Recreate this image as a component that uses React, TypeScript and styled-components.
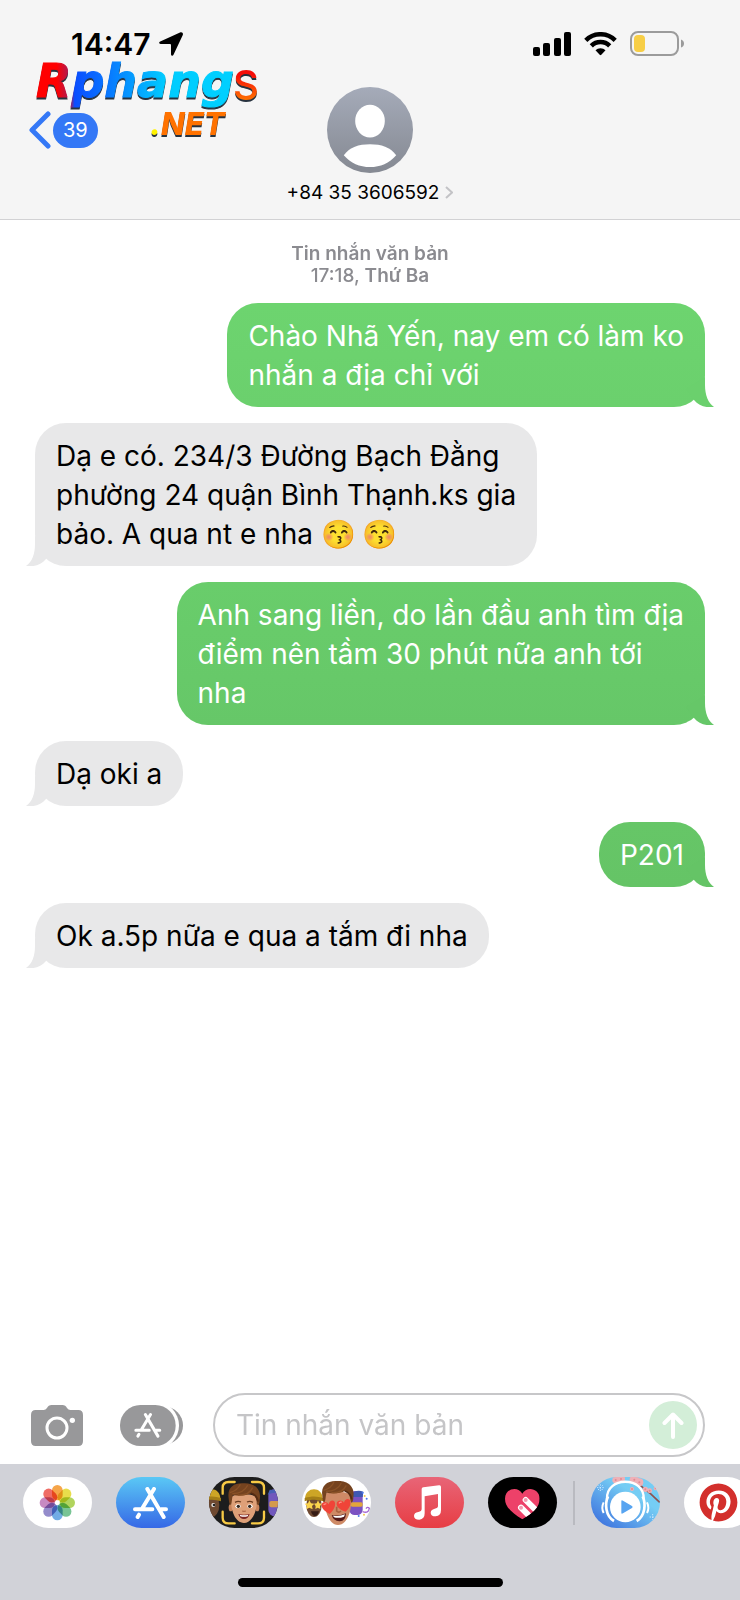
import React from "react";
import styled, { createGlobalStyle } from "styled-components";
import { FaPinterest } from "react-icons/fa";

const GlobalStyle = createGlobalStyle`
  * { box-sizing: border-box; }
  body {
    margin: 0;
    background: #fff;
    font-family: Inter, "Liberation Sans", sans-serif;
    color: #000;
  }
  button {
    border: 0;
    padding: 0;
    background: none;
    color: inherit;
    font: inherit;
    cursor: pointer;
  }
  svg { display: block; flex: none; }
`;

const Screen = styled.div`
  display: flex;
  flex-direction: column;
  min-height: 100vh;
  overflow: hidden;
`;

/* ---------- header ---------- */

const Header = styled.header`
  position: relative;
  background: #f5f5f5;
  border-bottom: 1px solid #d2d2d4;
`;

const StatusBar = styled.div`
  display: flex;
  align-items: center;
  justify-content: space-between;
  height: 87px;
  padding: 0 56px 0 71px;
`;

const Clock = styled.div`
  display: flex;
  align-items: center;
  gap: 8px;
  font-size: 30px;
  font-weight: 600;
  line-height: 36px;
`;

const Indicators = styled.div`
  display: flex;
  align-items: center;
  gap: 13px;
`;

const NavBar = styled.nav`
  display: grid;
  grid-template-columns: 1fr auto 1fr;
  padding: 0 28px 14px;
`;

const BackButton = styled.button`
  display: flex;
  align-items: center;
  gap: 2px;
  justify-self: start;
  height: 86px;
`;

const UnreadBadge = styled.span`
  padding: 0 10px;
  border-radius: 18px;
  background: #3478f6;
  color: #fff;
  font-size: 20px;
  line-height: 35px;
`;

const Contact = styled.button`
  display: flex;
  flex-direction: column;
  align-items: center;
  gap: 7px;
`;

const ContactName = styled.span`
  display: flex;
  align-items: center;
  gap: 6px;
  font-size: 19px;
  line-height: 25px;
`;

const SiteLogo = styled.svg`
  position: absolute;
  top: 50px;
  left: 30px;
  pointer-events: none;
  filter: drop-shadow(0 2px 0 #27323f);
`;

const LogoName = styled.text`
  font: italic 700 46px "DejaVu Sans", sans-serif;
  stroke-width: 1px;
`;
const LogoEnd = styled.text`
  font: 500 40px Inter, sans-serif;
`;
const LogoDomain = styled.text`
  font: italic 800 31px Inter, sans-serif;
`;

/* ---------- thread ---------- */

const Thread = styled.main`
  display: flex;
  flex: 1;
  flex-direction: column;
  gap: 16px;
  padding: 23px 35px;
`;

const DayStamp = styled.p`
  margin: 0;
  color: #8b8b90;
  font-size: 19px;
  font-weight: 600;
  line-height: 22px;
  text-align: center;
`;

const StampTime = styled.time`
  font-weight: 500;
`;

const Bubble = styled.div<{ $mine?: boolean; $tone: string }>`
  position: relative;
  align-self: ${(p) => (p.$mine ? "flex-end" : "flex-start")};
  max-width: 560px;
  padding: 14px 21px 12px;
  border-radius: 31px;
  background: ${(p) => p.$tone};
  color: ${(p) => (p.$mine ? "#fff" : "#000")};
  font-size: 28px;
  line-height: 39px;
  white-space: pre-line;
`;

const Tail = styled.svg<{ $mine?: boolean }>`
  position: absolute;
  bottom: 0;
  ${(p) => (p.$mine ? "right: -9px;" : "left: -9px; transform: scaleX(-1);")}
`;

const Emoji = styled.span`
  display: inline-block;
  height: 39px;
  margin-right: 6px;
  overflow: hidden;
  vertical-align: top;
`;

/* ---------- composer ---------- */

const Composer = styled.form`
  display: flex;
  align-items: center;
  gap: 30px;
  padding: 0 35px 7px 31px;
`;

const Attachments = styled.div`
  display: flex;
  gap: 37px;
`;

const Field = styled.div`
  display: flex;
  flex: 1;
  min-width: 0;
  align-items: center;
  height: 64px;
  padding: 0 6px 0 21px;
  border: 2px solid #c7c7c9;
  border-radius: 32px;
`;

const MessageInput = styled.input`
  flex: 1;
  min-width: 0;
  padding: 0;
  border: 0;
  outline: 0;
  background: none;
  font: 400 28px Inter, "Liberation Sans", sans-serif;
  &::placeholder { color: #c5c5c7; opacity: 1; }
`;

const SendButton = styled.button`
  display: grid;
  place-items: center;
  width: 48px;
  height: 48px;
  border-radius: 50%;
  background: #d3eed8;
`;

/* ---------- app drawer ---------- */

const Drawer = styled.footer`
  display: flex;
  flex-direction: column;
  justify-content: space-between;
  min-height: 136px;
  padding: 13px 0 13px 23px;
  background: #d1d2d8;
`;

const AppRow = styled.div`
  display: flex;
  align-items: center;
  overflow: hidden;
`;

const AppGroup = styled.div`
  display: flex;
  gap: 24px;
`;

const AppDivider = styled.span`
  flex: none;
  width: 2px;
  height: 44px;
  margin: 0 16px;
  background: #b9bac0;
`;

const AppTile = styled.button<{ $fill: string }>`
  display: grid;
  flex: none;
  place-items: center;
  width: 69px;
  height: 51px;
  overflow: hidden;
  border-radius: 26px;
  background: ${(p) => p.$fill};
`;

const HomeBar = styled.span`
  align-self: center;
  width: 265px;
  height: 9px;
  margin-right: 23px;
  border-radius: 5px;
  background: #000;
`;

/* ---------- drawings ---------- */

const StoreStrokes = ({ color }: { color: string }) => (
  <g stroke={color} strokeWidth="12" strokeLinecap="round" fill="none">
    <path d="M63 6 28 64M18 83 14 90M43 6 92 90M6 67H58M84 67H99" />
  </g>
);

const Hair = () => (
  <g>
    <path d="M57 60C52 28 72 14 99 15C128 12 157 28 150 64C150 78 145 84 142 76C140 60 136 50 126 44C110 53 86 53 70 50C66 58 68 76 62 80C58 76 58 68 57 60Z" fill="#75431f" />
    <path d="M68 46C82 46 104 42 114 21M84 50C106 52 122 42 129 28M61 43C72 40 86 32 92 18" stroke="#8a5227" strokeWidth="4" fill="none" />
    <path d="M124 44C134 48 144 58 145 70" stroke="#542b13" strokeWidth="5" fill="none" />
  </g>
);

const Beanie = ({ x }: { x: number }) => (
  <g transform={`translate(${x} 0)`}>
    <ellipse cx="0" cy="84" rx="23" ry="36" fill="#6e4931" />
    <path d="M-27 66C-27 28 26 26 26 66Z" fill="#cda526" />
    <path d="M-28 63C-8 57 10 57 28 63V73C10 67 -8 67 -28 73Z" fill="#a47e17" />
  </g>
);

const tail = "M31 0V8C31 18 34 26 40 30C32 31 25 29 20 23L12 12Z";

function Message({ mine, tone, children }: { mine?: boolean; tone: [string, string]; children: React.ReactNode }) {
  return (
    <Bubble $mine={mine} $tone={`linear-gradient(${tone[0]}, ${tone[1]})`}>
      {children}
      <Tail $mine={mine} width="40" height="30" viewBox="0 0 40 30" aria-hidden="true">
        <path d={tail} fill={tone[1]} />
      </Tail>
    </Bubble>
  );
}

const petals = ["#f59b35", "#e6da38", "#a9d04c", "#69be88", "#62a3e2", "#8880c6", "#c27dbb", "#ee5c54"];
const grey: [string, string] = ["#e8e8e9", "#e8e8e9"];

const Petal = styled.rect`
  mix-blend-mode: multiply;
`;

function PhotosIcon() {
  return (
    <svg width="69" height="51" viewBox="0 0 207 153">
      {petals.map((c, i) => (
        <Petal key={c} x="-16" y="-53" width="32" height="46" rx="16" fill={c} opacity="0.9"
          transform={`translate(103 77) rotate(${i * 45})`} />
      ))}
    </svg>
  );
}

function MemojiIcon() {
  return (
    <svg width="69" height="51" viewBox="0 0 207 153">
      <Beanie x={8} />
      <circle cx="13" cy="84" r="6" fill="#eee" /><circle cx="15" cy="84" r="4" fill="#222" />
      <g>
        <rect x="178" y="36" width="50" height="82" rx="20" fill="#7158bd" />
        <path d="M176 54C190 46 200 46 210 50V38H182Z" fill="#4860b5" />
        <rect x="181" y="72" width="30" height="19" rx="6" fill="#d49a4c" />
      </g>
      <g stroke="#f7ca45" strokeWidth="7" fill="none" strokeLinecap="round">
        <path d="M41 50V32Q41 15 59 15H77M129 15H147Q165 15 165 32V50M41 104V122Q41 139 59 139H77M129 139H147Q165 139 165 122V104" />
      </g>
      <g transform="translate(5 4)">
        <ellipse cx="60" cy="88" rx="6" ry="11" fill="#c78259" />
        <ellipse cx="140" cy="88" rx="6" ry="11" fill="#c78259" />
        <path d="M61 60C61 42 139 42 139 62C140 92 128 132 100 134C72 132 60 94 61 60Z" fill="#dea078" />
        <g transform="translate(-3 0)"><Hair /></g>
        <ellipse cx="82" cy="84" rx="8" ry="6" fill="#fff" /><circle cx="83" cy="84" r="5" fill="#35271d" />
        <ellipse cx="118" cy="84" rx="8" ry="6" fill="#fff" /><circle cx="117" cy="84" r="5" fill="#35271d" />
        <path d="M73 72Q82 67 91 71M109 71Q118 67 127 72" stroke="#6b3d20" strokeWidth="4" fill="none" />
        <path d="M95 97Q100 101 105 97" stroke="#b26e4a" strokeWidth="4" fill="none" />
        <path d="M83 107Q100 112 117 107Q113 122 100 122Q87 122 83 107Z" fill="#7c2523" />
        <path d="M87 109Q100 113 113 109L111 114Q100 117 89 114Z" fill="#fff" />
      </g>
    </svg>
  );
}

function StickersIcon() {
  return (
    <svg width="69" height="51" viewBox="0 0 207 153">
      <Beanie x={36} />
      <path d="M22 70 27 79 37 80 30 87 32 97 22 92 13 97 15 87 8 80 18 79ZM48 70 52 79 60 80 54 87 55 96 47 92 40 96 41 87 36 80 44 79Z" fill="#fbd34c" />
      <path d="M27 103H51Q47 118 38 117Q30 116 27 103Z" fill="#351b14" />
      <g>
        <rect x="142" y="42" width="40" height="72" rx="16" fill="#7b52c2" />
        <path d="M142 56Q162 34 184 44L182 60H142Z" fill="#3f58b2" />
        <rect x="146" y="76" width="36" height="13" rx="5" fill="#e2a63d" />
        <path d="M182 104Q200 110 202 94Q196 88 192 95" stroke="#a467d2" strokeWidth="4" fill="none" />
        <g fill="#4c78e8"><circle cx="182" cy="47" r="3" /><circle cx="194" cy="65" r="3" /><circle cx="170" cy="117" r="3" /></g>
        <g fill="#f3ca4c"><circle cx="188" cy="57" r="3" /><circle cx="186" cy="113" r="3" /></g>
      </g>
      <g transform="translate(4 -3)">
        <path d="M62 60C62 40 144 42 144 64C146 94 136 147 104 147C74 147 62 94 62 60Z" fill="#ce8a66" />
        <Hair />
        <path d="M100 92V105Q106 112 113 105" stroke="#a96341" strokeWidth="5" fill="none" />
        <path d="M85 117Q105 122 128 112Q127 137 108 136Q90 135 85 117Z" fill="#531a19" />
        <path d="M89 119Q107 123 125 115L122 122Q106 128 92 124Z" fill="#fff" />
      </g>
      <g fill="#f04438">
        <path d="M83 111C68 103 57 93 59 82C62 72 75 73 80 82C82 69 96 66 99 77C101 90 93 101 83 111Z" />
        <path d="M131 104C115 99 103 91 104 79C107 67 121 69 126 77C128 64 143 62 145 73C147 86 140 96 131 104Z" />
      </g>
      <path d="M65 84Q68 79 73 81M111 79Q114 74 119 76" stroke="#ff9689" strokeWidth="4" fill="none" />
    </svg>
  );
}

function MusicIcon() {
  return (
    <svg width="69" height="51" viewBox="0 0 207 153">
      <path d="M80 36Q80 32 85 31L132 25Q138 24 138 30V99Q138 117 122 118Q107 118 107 107Q107 98 119 95Q129 94 129 87V51L89 58V109Q89 127 73 128Q57 128 57 117Q57 107 70 105Q80 103 80 96Z" fill="#fff" />
    </svg>
  );
}

function TouchIcon() {
  return (
    <svg width="69" height="51" viewBox="0 0 207 153">
      <clipPath id="heart"><path d="M103 127C73 108 51 91 51 65C51 33 91 26 103 50C115 26 155 33 155 65C155 91 133 108 103 127Z" /></clipPath>
      <g clipPath="url(#heart)">
        <rect width="207" height="153" fill="#ed4169" />
        <g stroke="#fff" strokeWidth="18" strokeLinecap="round">
          <path d="M113 69 158 114M99 92 142 135" />
        </g>
        <circle cx="113" cy="69" r="6" fill="#f29bb0" /><circle cx="99" cy="92" r="6" fill="#f29bb0" />
      </g>
    </svg>
  );
}

function PlayerIcon() {
  const flowers = [[74, 9, 10], [90, 6, 12], [130, 8, 14], [145, 16, 12], [123, 36, 6], [163, 37, 8], [176, 41, 7], [194, 34, 6]];
  return (
    <svg width="69" height="51" viewBox="0 0 207 153">
      <path d="M142 20Q160 36 176 48L206 76" stroke="#8d5350" strokeWidth="5" fill="none" />
      {flowers.map(([x, y, r]) => (
        <g key={x}><circle cx={x} cy={y} r={r} fill="#efb0b6" /><circle cx={x} cy={y} r="3" fill="#e08a92" /></g>
      ))}
      <path d="M18 32H38M28 22V42M21 25 35 39M35 25 21 39M176 120H194M185 111V129" stroke="#c9e9ff" strokeWidth="3" strokeDasharray="4 4" />
      <g fill="none" stroke="#fff">
        <path d="M48 66C44 -3 162 -3 158 66" strokeWidth="7" />
        <path d="M51 58C41 80 43 116 69 132M155 58C165 80 163 116 137 132" strokeWidth="8" />
        <path d="M38 76Q30 92 38 108M168 76Q176 92 168 108" strokeWidth="6" />
      </g>
      <circle cx="103" cy="90" r="46" fill="#fff" />
      <path d="M91 73Q91 68 96 71L123 87Q127 90 123 93L96 109Q91 112 91 107Z" fill="#57a4f1" />
    </svg>
  );
}

export default function App() {
  return (
    <Screen>
      <GlobalStyle />
      <Header>
        <StatusBar>
          <Clock>
            14:47
            <svg width="24" height="24" viewBox="0 0 24 24" aria-hidden="true">
              <path d="M21 .5 1.200 9.500C-.4 10.300 0 11.900 1.600 12H11Q12 12 12 13V22.300C12.100 24 13.800 24.400 14.500 22.800L23.800 3C24.400 1 23-.4 21 .5Z" />
            </svg>
          </Clock>
          <Indicators>
            <svg width="38" height="24" viewBox="0 0 38 24" aria-label="Signal">
              <rect y="15" width="7" height="9" rx="2" /><rect x="10" y="11" width="7" height="13" rx="2" />
              <rect x="21" y="6" width="7" height="18" rx="2" /><rect x="31" width="7" height="24" rx="2" />
            </svg>
            <svg width="33" height="24" viewBox="0 0 33 24" aria-label="Wi-Fi">
              <g fill="none" stroke="#000" strokeWidth="4.500">
                <path d="M1.800 8.300A20.800 20.800 0 0 1 31.200 8.300M7.300 13.900A13 13 0 0 1 25.700 13.900" />
              </g>
              <path d="M11.500 18.300A7 7 0 0 1 21.500 18.300L17.300 22.800Q16.500 23.600 15.700 22.800Z" />
            </svg>
            <svg width="54" height="25" viewBox="0 0 54 25" aria-label="Battery">
              <rect x="1" y="1" width="47" height="23" rx="7" fill="none" stroke="#9b9b9b" strokeWidth="2" />
              <rect x="4" y="4" width="11" height="17" rx="4" fill="#f7ce46" />
              <path d="M51 8.500Q54 9.500 54 12.500Q54 15.500 51 16.500Z" fill="#9b9b9b" />
            </svg>
          </Indicators>
        </StatusBar>
        <NavBar>
          <BackButton aria-label="Back">
            <svg width="23" height="38" viewBox="0 0 23 38" aria-hidden="true">
              <path d="M20 3 4 19 20 35" fill="none" stroke="#3478f6" strokeWidth="5" strokeLinecap="round" strokeLinejoin="round" />
            </svg>
            <UnreadBadge>39</UnreadBadge>
          </BackButton>
          <Contact>
            <svg width="86" height="86" viewBox="0 0 87 87" aria-hidden="true">
              <defs>
                <linearGradient id="avatar" x2="0" y2="1"><stop stopColor="#a5abb9" /><stop offset="1" stopColor="#858992" /></linearGradient>
              </defs>
              <circle cx="43.500" cy="43.500" r="43.500" fill="url(#avatar)" />
              <ellipse cx="43.500" cy="34.500" rx="15" ry="16.500" fill="#fff" />
              <path d="M17 69C23 61 32 58 43.500 58S64 61 70 69C63 77 54 81 43.500 81S24 77 17 69Z" fill="#fff" />
            </svg>
            <ContactName>
              +84 35 3606592
              <svg width="8" height="13" viewBox="0 0 8 13" aria-hidden="true">
                <path d="M1 1 7 6.500 1 12" fill="none" stroke="#c3c3c6" strokeWidth="2" />
              </svg>
            </ContactName>
          </Contact>
        </NavBar>
        <SiteLogo width="235" height="92" viewBox="0 0 235 92">
          <defs>
            <linearGradient id="name" gradientUnits="userSpaceOnUse" x1="7" x2="205">
              <stop offset="0.100" stopColor="#ff0000" /><stop offset="0.170" stopColor="#a02060" />
              <stop offset="0.190" stopColor="#0a4dff" /><stop offset="0.360" stopColor="#0878ff" />
              <stop offset="0.650" stopColor="#00ccff" /><stop offset="1" stopColor="#00d0ff" />
            </linearGradient>
            <linearGradient id="end" x2="0" y2="1"><stop offset="0.300" stopColor="#f50d08" /><stop offset="0.850" stopColor="#ff7800" /></linearGradient>
          </defs>
          <LogoName x="6" y="47" fill="url(#name)" stroke="url(#name)">Rphang</LogoName>
          <LogoEnd x="203" y="49" fill="url(#end)">S</LogoEnd>
          <LogoDomain x="120" y="85" fill="#ff7200"><tspan fill="#fff200">.</tspan>NET</LogoDomain>
        </SiteLogo>
      </Header>

      <Thread>
        <DayStamp>
          Tin nhắn văn bản<br />
          <StampTime>17:18,</StampTime> Thứ Ba
        </DayStamp>
        <Message mine tone={["#6dd46f", "#6bd06d"]}>{"Chào Nhã Yến, nay em có làm ko\nnhắn a địa chỉ với"}</Message>
        <Message tone={grey}>
          {"Dạ e có. 234/3 Đường Bạch Đằng\nphường 24 quận Bình Thạnh.ks gia\nbảo. A qua nt e nha "}
          <Emoji>😚</Emoji><Emoji>😚</Emoji>
        </Message>
        <Message mine tone={["#69cd6b", "#66c768"]}>{"Anh sang liền, do lần đầu anh tìm địa\nđiểm nên tầm 30 phút nữa anh tới\nnha"}</Message>
        <Message tone={grey}>Dạ oki a</Message>
        <Message mine tone={["#66c667", "#65c466"]}>P201</Message>
        <Message tone={grey}>Ok a.5p nữa e qua a tắm đi nha</Message>
      </Thread>

      <Composer onSubmit={(e) => e.preventDefault()}>
        <Attachments>
          <button type="button" aria-label="Camera">
            <svg width="52" height="41" viewBox="0 0 156 123">
              <path d="M14 15H38Q44 15 48 9Q52 0 62 0H94Q104 0 108 9Q112 15 118 15H142Q156 15 156 30V108Q156 123 142 123H14Q0 123 0 108V30Q0 15 14 15Z" fill="#98989a" />
              <circle cx="78" cy="69" r="30" fill="none" stroke="#fff" strokeWidth="9" />
              <circle cx="124" cy="46" r="8" fill="#fff" />
            </svg>
          </button>
          <button type="button" aria-label="Apps">
            <svg width="63" height="41" viewBox="0 0 189 123">
              <rect x="60" y="5" width="129" height="113" rx="56" fill="#98989a" />
              <rect x="-10" y="-9" width="187" height="141" rx="70" fill="#fff" />
              <rect width="167" height="123" rx="61" fill="#98989a" />
              <g transform="translate(43 24) scale(.77)"><StoreStrokes color="#fff" /></g>
            </svg>
          </button>
        </Attachments>
        <Field>
          <MessageInput aria-label="Tin nhắn văn bản" placeholder="Tin nhắn văn bản" />
          <SendButton type="submit" aria-label="Send">
            <svg width="22" height="27" viewBox="0 0 22 27">
              <path d="M11 25V3M2.500 11 11 2.500 19.500 11" fill="none" stroke="#fff" strokeWidth="4" strokeLinecap="round" strokeLinejoin="round" />
            </svg>
          </SendButton>
        </Field>
      </Composer>

      <Drawer>
        <AppRow>
          <AppGroup>
            <AppTile $fill="#fff" aria-label="Photos"><PhotosIcon /></AppTile>
            <AppTile $fill="linear-gradient(#5ac8f5, #3668e6)" aria-label="App Store">
              <svg width="35" height="32" viewBox="0 0 105 96"><StoreStrokes color="#fff" /></svg>
            </AppTile>
            <AppTile $fill="#1d1d1d" aria-label="Memoji"><MemojiIcon /></AppTile>
            <AppTile $fill="#fff" aria-label="Stickers"><StickersIcon /></AppTile>
            <AppTile $fill="linear-gradient(#e86577, #e73d44)" aria-label="Music"><MusicIcon /></AppTile>
            <AppTile $fill="#000" aria-label="Digital Touch"><TouchIcon /></AppTile>
          </AppGroup>
          <AppDivider />
          <AppGroup>
            <AppTile $fill="linear-gradient(215deg, #75cdf4 35%, #4076df 90%)" aria-label="Player"><PlayerIcon /></AppTile>
            <AppTile $fill="#fff" aria-label="Pinterest"><FaPinterest size={39} color="#d32f2c" /></AppTile>
          </AppGroup>
        </AppRow>
        <HomeBar />
      </Drawer>
    </Screen>
  );
}
